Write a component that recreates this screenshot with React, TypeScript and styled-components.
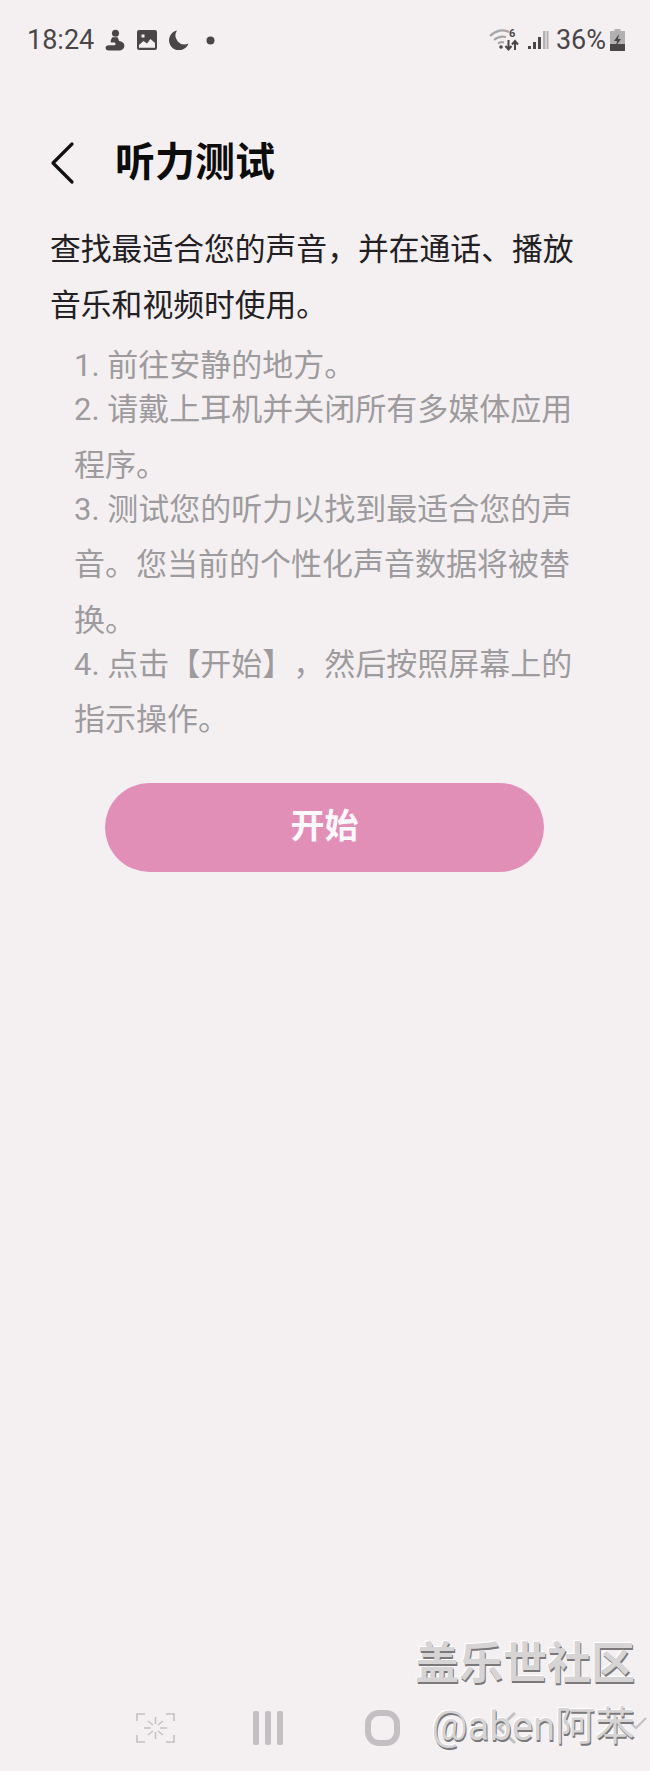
import styled, { createGlobalStyle } from 'styled-components';

const GlobalStyle = createGlobalStyle`
  html, body {
    margin: 0;
    padding: 0;
    background: #f4f0f2;
  }
`;

const Page = styled.div`
  position: relative;
  height: 1771px;
  background: #f4f0f2;
  display: flex;
  flex-direction: column;
  overflow: hidden;
  font-family: Roboto, "Noto Sans CJK SC", sans-serif;
  text-spacing-trim: space-all;
`;

const StatusBar = styled.div`
  height: 40px;
  margin-top: 20px;
  padding: 0 25px 0 27px;
  display: flex;
  align-items: center;
  justify-content: space-between;
  color: #4a4648;
`;

const StatusGroup = styled.div`
  display: flex;
  align-items: center;
`;

const StatusText = styled.span<{ $inset?: number }>`
  font-size: 27px;
  font-weight: 400;
  line-height: 40px;
  margin-left: ${(p) => p.$inset ?? 0}px;
  margin-right: ${(p) => (p.$inset ? 4 : 0)}px;
`;

const Header = styled.header`
  height: 60px;
  margin-top: 73px;
  padding-left: 48px;
  display: flex;
  align-items: center;
  gap: 38px;
`;

const BackButton = styled.button`
  width: 29px;
  height: 46px;
  padding: 0;
  background: none;
  border: none;
  color: #111;
`;

const Title = styled.h1`
  margin: 0;
  font-size: 40px;
  line-height: 60px;
  font-weight: 700;
  color: #0c0c0c;
`;

const Intro = styled.p`
  margin: 29px 0 0;
  padding: 0 60px 0 50px;
  font-size: 30.8px;
  line-height: 56px;
  color: #222022;
`;

const Steps = styled.ol`
  list-style: none;
  margin: 4px 0 0;
  padding: 0 66px 0 74px;
`;

const Step = styled.li`
  font-size: 31px;
  line-height: 55.5px;
  color: #9d9b9d;
  & + & {
    margin-top: -11.5px;
  }
`;

const StartButton = styled.button`
  align-self: flex-start;
  width: 439px;
  height: 89px;
  margin: 35px 0 0 105px;
  padding: 0 0 8px;
  border: none;
  border-radius: 45px;
  background: #e28fb8;
  color: #fdf8fb;
  font-family: inherit;
  font-size: 34px;
  font-weight: 700;
`;

const NavBar = styled.nav`
  margin-top: auto;
  height: 37px;
  margin-bottom: 25px;
  padding-left: 136px;
  display: flex;
  align-items: center;
  color: #c2c0c2;
`;

const Watermark = styled.div`
  position: absolute;
  right: 15px;
  bottom: 16px;
  display: flex;
  flex-direction: column;
  align-items: flex-end;
  color: #d6d4d5;
  text-shadow: 1px 2px 0 #7a7879, -1px -1px 0 #fff;
`;

const MarkTitle = styled.div`
  font-size: 44px;
  line-height: 58px;
  font-weight: 700;
`;

const MarkUser = styled.div`
  font-size: 40px;
  line-height: 56px;
  margin-top: 6px;
`;

const Glyph = styled.svg<{ $gap?: number }>`
  flex: none;
  margin-left: ${(p) => p.$gap ?? 0}px;
`;

const PersonIcon = () => (
  <Glyph $gap={11} width="21" height="23" viewBox="0 0 20 22" fill="currentColor">
    <circle cx="10" cy="4" r="3.4" />
    <path d="M7 8h5l1.500 3.500c2.500.3 5 1.800 5 4.500 0 3-2.500 4.500-5 4.500H3.500C1.500 20.500.5 19.500.5 18c0-1.500 1.200-2.500 3-2.500h5c1 0 1.500-.5 1.500-1.200 0-.7-.5-1.300-1.500-1.300H5.500C5 11.500 6 9.500 7 8z" />
  </Glyph>
);

const ImageIcon = () => (
  <Glyph $gap={11} width="20" height="20" viewBox="0 0 20 20">
    <rect width="20" height="20" rx="2" fill="currentColor" />
    <path d="M2 15l4.500-4 3.500 2.500 3.500-4.500L18 13v4.800H2z" fill="#f4f0f2" />
    <rect x="4.500" y="4.500" width="3" height="3" fill="#f4f0f2" />
  </Glyph>
);

const MoonIcon = () => (
  <Glyph $gap={12} width="20" height="20" viewBox="0 0 20 20" fill="currentColor">
    <path d="M8 .5A10 10 0 1 0 19.500 13.500 9 9 0 0 1 8 .5z" />
  </Glyph>
);

const DotIcon = () => (
  <Glyph $gap={17} width="9" height="9" viewBox="0 0 9 9" fill="currentColor">
    <circle cx="4.500" cy="4.500" r="4" />
  </Glyph>
);

const WifiIcon = () => (
  <Glyph width="30" height="24" viewBox="0 0 30 24">
    <path d="M1 8c6-6 14-7 19-4M5 12c4-3.500 8-4 12-3M9 15.500c2-1.500 4-1.500 6-1" fill="none" stroke="#a9a6a8" strokeWidth="2.2" />
    <circle cx="12" cy="19" r="1.800" fill="#4a4648" />
    <path d="M19.500 12v9M16.500 18l3 3.500 3-3.500M26 22v-9M23 16.500l3-3.500 3 3.500" fill="none" stroke="#4a4648" strokeWidth="2" />
    <text x="20" y="9" fontSize="11" fontWeight="700" fill="#4a4648" fontFamily="Roboto, sans-serif">6</text>
  </Glyph>
);

const SignalIcon = () => (
  <Glyph $gap={9} width="21" height="20" viewBox="0 0 21 20" fill="#4a4648">
    <rect x="0" y="16" width="3" height="3" />
    <rect x="5" y="12" width="3" height="7" />
    <rect x="10" y="7" width="3" height="12" />
    <rect x="15" y="1" width="2.500" height="18" fill="#b3b0b2" />
    <rect x="18.500" y="1" width="2" height="18" fill="#b3b0b2" />
  </Glyph>
);

const BatteryIcon = () => (
  <Glyph width="15" height="22" viewBox="0 0 15 22">
    <path d="M4.500 0h6v2H15v20H0V2h4.500z" fill="#b3b0b2" />
    <path d="M0 15h15v7H0z" fill="#4a4648" />
    <path d="M9 5L4 12h3l-1 5 5-7H8z" fill="#4a4648" />
  </Glyph>
);

const ChevronIcon = () => (
  <Glyph width="29" height="46" viewBox="0 0 29 46" fill="none" stroke="currentColor" strokeWidth="3.2" strokeLinecap="round" strokeLinejoin="round">
    <path d="M24 4L5 23l19 19" />
  </Glyph>
);

const CaptureIcon = () => (
  <Glyph width="39" height="30" viewBox="0 0 39 30" fill="none" stroke="currentColor" strokeWidth="1.6">
    <path d="M9 1H1v7M30 1h8v7M9 29H1v-7M30 29h8v-7" />
    <path d="M19.500 4v7M19.500 19v7M8 15h7M24 15h7M12 8l5 4M27 8l-5 4M12 22l5-4M27 22l-5-4" />
  </Glyph>
);

const RecentsIcon = () => (
  <Glyph $gap={78} width="30" height="34" viewBox="0 0 30 34" fill="currentColor">
    <rect x="0" y="0" width="6" height="34" rx="2" />
    <rect x="12" y="0" width="6" height="34" rx="2" />
    <rect x="24" y="0" width="6" height="34" rx="2" />
  </Glyph>
);

const HomeIcon = () => (
  <Glyph $gap={82} width="35" height="36" viewBox="0 0 35 36" fill="none" stroke="currentColor" strokeWidth="6">
    <rect x="3" y="3" width="29" height="30" rx="11" />
  </Glyph>
);

const NavBackIcon = () => (
  <Glyph $gap={96} width="22" height="34" viewBox="0 0 22 34" fill="none" stroke="currentColor" strokeWidth="3">
    <path d="M19 2L3 17l16 15" />
  </Glyph>
);

const KeyboardIcon = () => (
  <Glyph $gap={106} width="24" height="28" viewBox="0 0 24 28" fill="none" stroke="currentColor" strokeWidth="2">
    <path d="M2 4l10 10L22 4" />
  </Glyph>
);

const steps = [
  '1. 前往安静的地方。',
  '2. 请戴上耳机并关闭所有多媒体应用程序。',
  '3. 测试您的听力以找到最适合您的声音。您当前的个性化声音数据将被替换。',
  '4. 点击【开始】，然后按照屏幕上的指示操作。',
];

export default function App() {
  return (
    <Page>
      <GlobalStyle />
      <StatusBar>
        <StatusGroup>
          <StatusText>18:24</StatusText>
          <PersonIcon />
          <ImageIcon />
          <MoonIcon />
          <DotIcon />
        </StatusGroup>
        <StatusGroup>
          <WifiIcon />
          <SignalIcon />
          <StatusText $inset={7}>36%</StatusText>
          <BatteryIcon />
        </StatusGroup>
      </StatusBar>

      <Header>
        <BackButton aria-label="返回">
          <ChevronIcon />
        </BackButton>
        <Title>听力测试</Title>
      </Header>

      <Intro>查找最适合您的声音，并在通话、播放音乐和视频时使用。</Intro>

      <Steps>
        {steps.map((s) => (
          <Step key={s}>{s}</Step>
        ))}
      </Steps>

      <StartButton>开始</StartButton>

      <NavBar>
        <CaptureIcon />
        <RecentsIcon />
        <HomeIcon />
        <NavBackIcon />
        <KeyboardIcon />
      </NavBar>

      <Watermark>
        <MarkTitle>盖乐世社区</MarkTitle>
        <MarkUser>@aben阿苯</MarkUser>
      </Watermark>
    </Page>
  );
}
